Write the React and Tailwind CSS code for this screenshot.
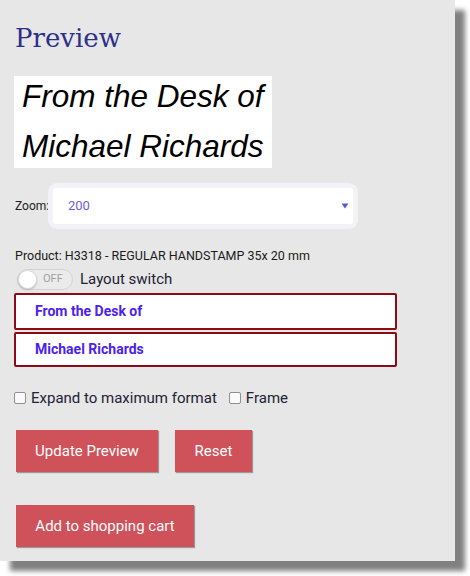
import React from "react";

export default function App() {
  return (
    <div className="w-[470px] h-[576px] bg-white overflow-hidden" style={{ fontFamily: "Roboto, 'Liberation Sans', sans-serif" }}>
      <div className="w-[455px] h-[561px] bg-[#e7e7e7] shadow-[10px_10px_5px_#808080] pl-[14px] flex flex-col">
        <h1 className="pt-[23px] pl-[1px] text-[26px] leading-[30px] text-[#2d2f88]" style={{ fontFamily: "'DejaVu Serif', serif" }}>
          Preview
        </h1>
        <div
          className="mt-[23px] w-[258px] h-[92px] bg-white pl-[8px] flex flex-col gap-[10px] italic text-[31.5px] leading-[40px] text-black"
          style={{ fontFamily: "'Liberation Sans', Arial, sans-serif" }}
        >
          <div>From the Desk of</div>
          <div>Michael Richards</div>
        </div>
        <div className="mt-[15px] flex items-center h-[46px]">
          <span className="w-[34px] pl-[1px] text-[12px] text-[#222]">Zoom:</span>
          <div className="w-[310px] p-[5px] rounded-[9px] bg-[#f2f2f8]">
            <div className="h-[36px] bg-white rounded-[3px] flex items-center justify-between pl-[15px] pr-[4px]">
              <span className="text-[13px] text-[#6a5ee0]">200</span>
              <svg width="8" height="6" viewBox="0 0 8 6">
                <path d="M0.5 0.5 H7.5 L4 5.5 Z" fill="#5a5ad6" />
              </svg>
            </div>
          </div>
        </div>
        <div className="mt-[19px] pl-[1px] text-[12.5px] leading-[16px] text-[#1a1a1a]">
          Product: H3318 - REGULAR HANDSTAMP 35x 20 mm
        </div>
        <div className="mt-[5px] flex items-center h-[21px]">
          <div className="ml-[3px] relative w-[56px] h-[21px] rounded-full border border-[#d3d3d3] bg-[#ebebeb] flex items-center">
            <div className="absolute left-[0px] top-[0px] w-[19px] h-[19px] rounded-full bg-white border border-[#dcdcdc] shadow-[0_1px_2px_rgba(0,0,0,0.2)]" />
            <span className="ml-[25px] text-[11px] text-[#a0a0a0]">OFF</span>
          </div>
          <span className="ml-[7px] text-[15px] text-[#222233]">Layout switch</span>
        </div>
        <div className="mt-[3px] w-[383px] flex flex-col gap-[2px]">
          <div className="h-[37px] border-2 border-[#8a0a16] rounded-[2px] bg-white flex items-center pl-[19px] text-[14px] font-bold text-[#4b22ea]">
            From the Desk of
          </div>
          <div className="h-[35px] border-2 border-[#8a0a16] rounded-[2px] bg-white flex items-center pl-[19px] text-[14px] font-bold text-[#4b22ea]">
            Michael Richards
          </div>
        </div>
        <div className="mt-[21px] flex items-center h-[20px] text-[15px] text-[#222233]">
          <span className="w-[12px] h-[12px] rounded-[2px] border border-[#8f8f8f] bg-[#fafafa]" />
          <span className="ml-[5px]">Expand to maximum format</span>
          <span className="ml-[12px] w-[12px] h-[12px] rounded-[2px] border border-[#8f8f8f] bg-[#fafafa]" />
          <span className="ml-[5px]">Frame</span>
        </div>
        <div className="mt-[22px] ml-[2px] flex gap-[17px]">
          <button className="w-[142px] h-[42px] bg-[#cf5159] text-white text-[15px] shadow-[1px_1px_1px_#9a9a9a]">Update Preview</button>
          <button className="w-[77px] h-[42px] bg-[#cf5159] text-white text-[15px] shadow-[1px_1px_1px_#9a9a9a]">Reset</button>
        </div>
        <div className="mt-[33px] ml-[2px] flex">
          <button className="w-[178px] h-[42px] bg-[#cf5159] text-white text-[15px] shadow-[1px_1px_1px_#9a9a9a]">Add to shopping cart</button>
        </div>
      </div>
    </div>
  );
}
